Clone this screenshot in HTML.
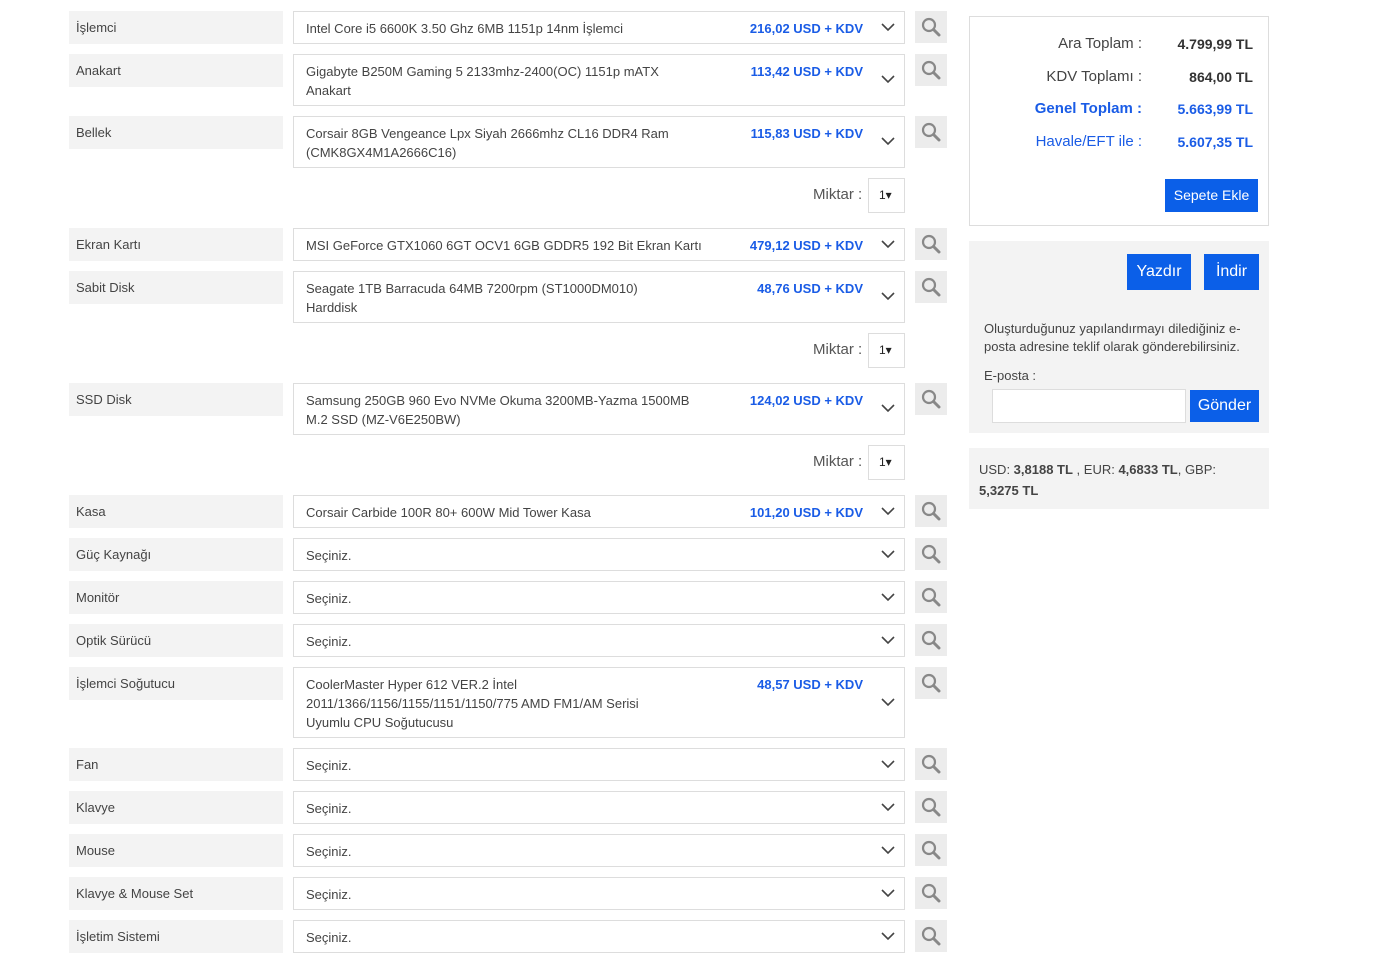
<!DOCTYPE html><html><head><meta charset="utf-8"><style>
body{margin:0;width:1391px;height:940px;overflow:hidden;background:#fff;font-family:"Liberation Sans",sans-serif;color:#444;position:relative;font-size:13px}
.a{position:absolute}
.lb{position:absolute;left:69px;width:207px;height:33px;background:#f3f3f3;padding-left:7px;line-height:33px;font-size:13px;color:#444}
.sel{position:absolute;left:293px;width:610px;border:1px solid #ddd;background:#fff}
.sel .t{position:absolute;left:12px;top:7px;width:440px;line-height:19px;font-size:13px;color:#444}
.sel .p{position:absolute;right:41px;top:7px;line-height:19px;color:#1a5ce6;font-weight:bold;font-size:13px}
.sel svg.ch{position:absolute;right:9px}
.sb{position:absolute;left:915px;width:32px;height:32px;background:#ececec}
.sb svg{position:absolute;left:6px;top:6px}
.mk{position:absolute;left:813px;font-size:15px;color:#555}
.mb{position:absolute;left:868px;width:35px;height:33px;border:1px solid #ddd;font-size:12px;line-height:33px;text-indent:10px;color:#222}
.btn{position:absolute;background:#0b5fe8;color:#fff;text-align:center}
</style></head><body>
<div id="rows"></div>
<script>
var R=[["İşlemci",11,33,"Intel Core i5 6600K 3.50 Ghz 6MB 1151p 14nm İşlemci","216,02 USD + KDV"],
["Anakart",54,52,"Gigabyte B250M Gaming 5 2133mhz-2400(OC) 1151p mATX<br>Anakart","113,42 USD + KDV"],
["Bellek",116,52,"Corsair 8GB Vengeance Lpx Siyah 2666mhz CL16 DDR4 Ram<br>(CMK8GX4M1A2666C16)","115,83 USD + KDV",178],
["Ekran Kartı",228,33,"MSI GeForce GTX1060 6GT OCV1 6GB GDDR5 192 Bit Ekran Kartı","479,12 USD + KDV"],
["Sabit Disk",271,52,"Seagate 1TB Barracuda 64MB 7200rpm (ST1000DM010)<br>Harddisk","48,76 USD + KDV",333],
["SSD Disk",383,52,"Samsung 250GB 960 Evo NVMe Okuma 3200MB-Yazma 1500MB<br>M.2 SSD (MZ-V6E250BW)","124,02 USD + KDV",445],
["Kasa",495,33,"Corsair Carbide 100R 80+ 600W Mid Tower Kasa","101,20 USD + KDV"],
["Güç Kaynağı",538,33,"Seçiniz.",""],["Monitör",581,33,"Seçiniz.",""],["Optik Sürücü",624,33,"Seçiniz.",""],
["İşlemci Soğutucu",667,71,"CoolerMaster Hyper 612 VER.2 İntel<br>2011/1366/1156/1155/1151/1150/775 AMD FM1/AM Serisi<br>Uyumlu CPU Soğutucusu","48,57 USD + KDV"],
["Fan",748,33,"Seçiniz.",""],["Klavye",791,33,"Seçiniz.",""],["Mouse",834,33,"Seçiniz.",""],["Klavye & Mouse Set",877,33,"Seçiniz.",""],["İşletim Sistemi",920,33,"Seçiniz.",""]];
var h="";R.forEach(function(r){var y=r[1],H=r[2];
h+='<div class="lb" style="top:'+y+'px">'+r[0]+'</div>';
h+='<div class="sel" style="top:'+y+'px;height:'+(H-2)+'px"><div class="t">'+r[3]+'</div><div class="p">'+r[4]+'</div><svg class="ch" style="top:'+((H-2)/2-5)+'px" width="14" height="9" viewBox="0 0 14 9"><path d="M1 1l6 6 6-6" fill="none" stroke="#444" stroke-width="1.6"/></svg></div>';
h+='<div class="sb" style="top:'+y+'px"><svg width="20" height="20" viewBox="0 0 20 20"><circle cx="8" cy="8" r="6" fill="none" stroke="#888" stroke-width="2.2"/><path d="M12.5 12.5l5.5 5.5" stroke="#888" stroke-width="3" stroke-linecap="round"/></svg></div>';
if(r[5])h+='<div class="mk" style="top:'+(r[5]+8)+'px">Miktar :</div><div class="mb" style="top:'+r[5]+'px">1▾</div>';});
document.getElementById("rows").innerHTML=h;
</script>
<div class="a" style="left:969px;top:16px;width:298px;height:208px;border:1px solid #ddd"></div>
<div class="a" style="left:990px;top:28px;width:152px;text-align:right;font-size:15px;line-height:32.5px;color:#444">Ara Toplam :<br>KDV Toplamı :<br><b style="color:#1a5ce6">Genel Toplam :</b><br><span style="color:#1a5ce6">Havale/EFT ile :</span></div>
<div class="a" style="left:1150px;top:28px;width:103px;text-align:right;font-size:14px;font-weight:bold;line-height:32.5px;color:#333">4.799,99 TL<br>864,00 TL<br><span style="color:#1a5ce6">5.663,99 TL</span><br><span style="color:#1a5ce6">5.607,35 TL</span></div>
<div class="btn" style="left:1165px;top:179px;width:93px;height:33px;line-height:33px;font-size:14px">Sepete Ekle</div>
<div class="a" style="left:969px;top:241px;width:300px;height:192px;background:#f3f3f3"></div>
<div class="btn" style="left:1127px;top:254px;width:64px;height:36px;line-height:36px;font-size:16px">Yazdır</div>
<div class="btn" style="left:1204px;top:254px;width:55px;height:36px;line-height:36px;font-size:16px">İndir</div>
<div class="a" style="left:984px;top:320px;width:275px;font-size:13px;line-height:18px;color:#444">Oluşturduğunuz yapılandırmayı dilediğiniz e-posta adresine teklif olarak gönderebilirsiniz.</div>
<div class="a" style="left:984px;top:368px;font-size:13px">E-posta :</div>
<div class="a" style="left:992px;top:389px;width:192px;height:32px;border:1px solid #ddd;background:#fff"></div>
<div class="btn" style="left:1190px;top:390px;width:69px;height:32px;line-height:32px;font-size:16px">Gönder</div>
<div class="a" style="left:969px;top:448px;width:300px;height:61px;background:#f3f3f3"></div>
<div class="a" style="left:979px;top:459px;width:280px;font-size:13px;line-height:21px;color:#444">USD: <b>3,8188 TL</b> , EUR: <b>4,6833 TL</b>, GBP: <b>5,3275 TL</b></div>
</body></html>
